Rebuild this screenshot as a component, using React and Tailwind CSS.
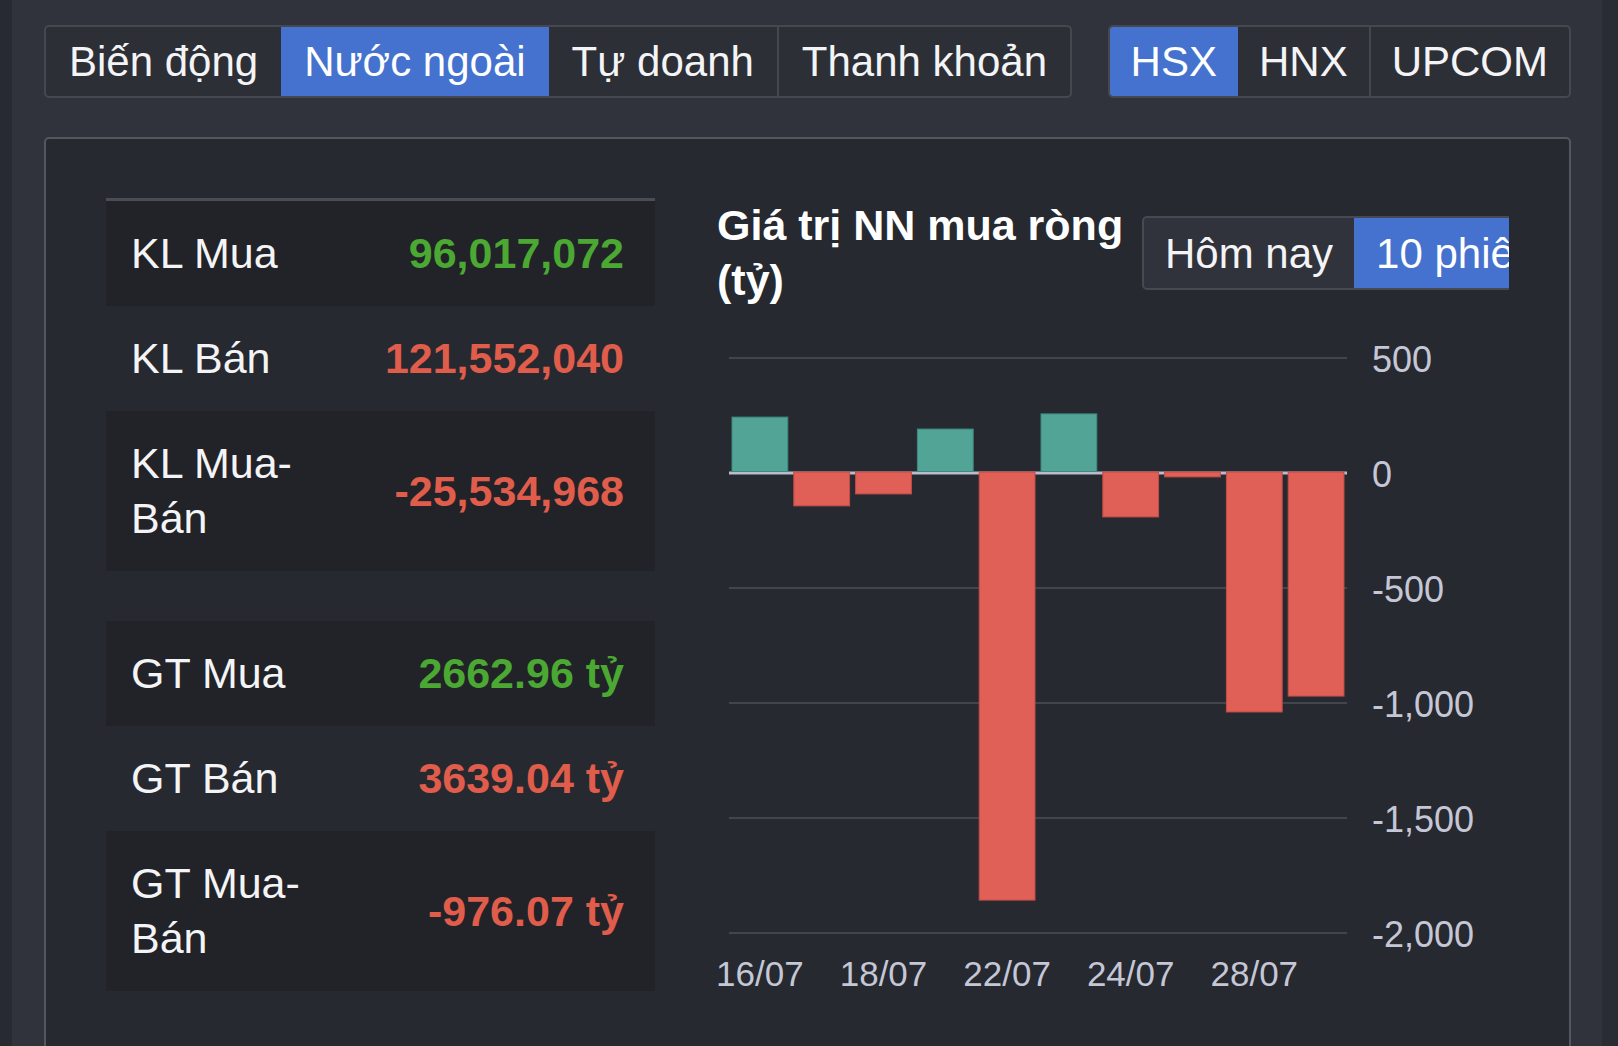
import React from 'react';

const MARKET_TABS = ['Biến động', 'Nước ngoài', 'Tự doanh', 'Thanh khoản'];
const EXCHANGES = ['HSX', 'HNX', 'UPCOM'];

const VOLUME_ROWS = [
  { label: 'KL Mua', value: '96,017,072', tone: 'up' },
  { label: 'KL Bán', value: '121,552,040', tone: 'down' },
  { label: 'KL Mua-Bán', value: '-25,534,968', tone: 'down' },
];

const VALUE_ROWS = [
  { label: 'GT Mua', value: '2662.96 tỷ', tone: 'up' },
  { label: 'GT Bán', value: '3639.04 tỷ', tone: 'down' },
  { label: 'GT Mua-Bán', value: '-976.07 tỷ', tone: 'down' },
];

// net foreign buy value per session (tỷ)
const SESSIONS = [
  { date: '16/07', value: 243 },
  { date: '17/07', value: -143 },
  { date: '18/07', value: -91 },
  { date: '21/07', value: 191 },
  { date: '22/07', value: -1857 },
  { date: '23/07', value: 257 },
  { date: '24/07', value: -191 },
  { date: '25/07', value: -17 },
  { date: '28/07', value: -1039 },
  { date: '29/07', value: -970 },
];

const TICKS = [500, 0, -500, -1000, -1500, -2000];

function TabGroup({ items, active, wide }) {
  const pad = wide ? 'px-[23px]' : 'px-[21px]';
  return (
    <div className="flex h-[73px] rounded-[5px] border-2 border-[#45484f] bg-[#2c2f36] overflow-hidden">
      {items.map((item, i) => (
        <div
          key={item}
          className={
            item === active
              ? `flex items-center ${pad} bg-[#4472ce] text-white`
              : i > 0 && items[i - 1] !== active
              ? `flex items-center ${pad} border-l-2 border-[#45484f] text-[#f4f4f6]`
              : `flex items-center ${pad} text-[#f4f4f6]`
          }
        >
          {item}
        </div>
      ))}
    </div>
  );
}

function StatTable({ rows, topBorder }) {
  return (
    <div className={topBorder ? 'border-t-[3px] border-[#4a4d55]' : ''}>
      {rows.map((row, i) => (
        <div
          key={row.label}
          className={
            i % 2 === 0
              ? 'flex items-center justify-between py-[25px] bg-[#212329]'
              : 'flex items-center justify-between py-[25px]'
          }
        >
          <div className="w-[230px] pl-[25px] leading-[55px] text-[#f4f4f6]">{row.label}</div>
          <div
            className={
              row.tone === 'up'
                ? 'pr-[31px] font-bold leading-[55px] text-[#4ba832]'
                : 'pr-[31px] font-bold leading-[55px] text-[#e05d4b]'
            }
          >
            {row.value}
          </div>
        </div>
      ))}
    </div>
  );
}

function NetBuyChart() {
  const left = 12;
  const right = 630;
  const zeroY = 165;
  const pxPerUnit = 115 / 500;
  const slot = (right - left) / SESSIONS.length;
  const yOf = (v) => zeroY - v * pxPerUnit;

  return (
    <svg width="792" height="700" className="block">
      {TICKS.map((t) =>
        t === 0 ? null : (
          <line key={t} x1={left} x2={right} y1={yOf(t)} y2={yOf(t)} stroke="#43454d" strokeWidth="2" />
        )
      )}
      <line x1={left} x2={right} y1={zeroY} y2={zeroY} stroke="#b9bccc" strokeWidth="3" />
      {SESSIONS.map((s, i) => {
        const x = left + i * slot + 3;
        const w = slot - 6;
        const up = s.value >= 0;
        const y = up ? yOf(s.value) : zeroY - 1;
        const h = up ? zeroY - 1.5 - yOf(s.value) : -s.value * pxPerUnit + 1;
        return (
          <rect
            key={s.date}
            x={x}
            y={y}
            width={w}
            height={h}
            fill={up ? '#52a497' : '#e05f57'}
            stroke={up ? '#3f8a7e' : '#c24c46'}
            strokeWidth="1"
          />
        );
      })}
      {TICKS.map((t) => (
        <text
          key={t}
          x="655"
          y={yOf(t) + 4}
          dominantBaseline="middle"
          fontSize="36"
          fill="#c5c7d6"
          fontFamily="Liberation Sans, Arial, sans-serif"
        >
          {t.toLocaleString('en-US')}
        </text>
      ))}
      {SESSIONS.map((s, i) =>
        i % 2 === 0 ? (
          <text
            key={s.date}
            x={left + i * slot + slot / 2}
            y="669"
            textAnchor="middle"
            dominantBaseline="middle"
            fontSize="35"
            fill="#c5c7d6"
            fontFamily="Liberation Sans, Arial, sans-serif"
          >
            {s.date}
          </text>
        ) : null
      )}
    </svg>
  );
}

export default function App() {
  return (
    <div className="flex h-[1046px] overflow-hidden bg-[#30333b] font-['Liberation_Sans',Arial,sans-serif] text-[42px]">
      <div className="w-[12px] shrink-0 bg-[#272a31]" />
      <div className="flex-1 min-w-0 pl-[32px] pr-[31px] pt-[25px]">
        <div className="flex justify-between">
          <TabGroup items={MARKET_TABS} active="Nước ngoài" wide />
          <TabGroup items={EXCHANGES} active="HSX" />
        </div>

        <div className="mt-[39px] h-[1000px] rounded-[5px] border-2 border-[#54575e] bg-[#262930] pl-[60px] pr-[60px] pt-[59px]">
          <div className="flex gap-[62px]">
            <div className="w-[549px] shrink-0 text-[43px]">
              <StatTable rows={VOLUME_ROWS} topBorder />
              <div className="h-[50px]" />
              <StatTable rows={VALUE_ROWS} />
            </div>

            <div className="flex-1 min-w-0 overflow-hidden">
              <div className="flex items-center">
                <div className="w-[425px] shrink-0 text-[43px] font-bold leading-[55px] text-white">
                  Giá trị NN mua ròng (tỷ)
                </div>
                <div className="flex h-[74px] shrink-0 rounded-l-[5px] border-2 border-[#46494f] bg-[#30333b]">
                  <div className="flex items-center px-[21px] text-[#f4f4f6]">Hôm nay</div>
                  <div className="flex items-center px-[22px] bg-[#4472ce] text-white">10 phiên</div>
                </div>
              </div>
              <NetBuyChart />
            </div>
          </div>
        </div>
      </div>
      <div className="w-[16px] shrink-0 bg-[#292c33]" />
    </div>
  );
}
